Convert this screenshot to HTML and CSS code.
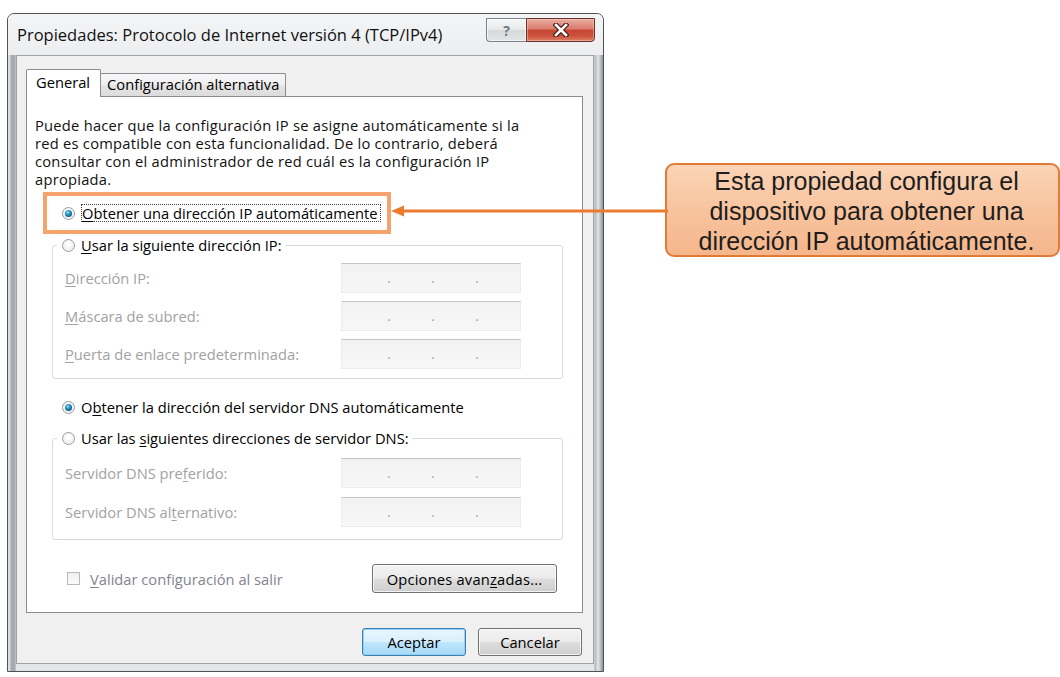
FILE: index.html
```html
<!DOCTYPE html>
<html lang="es">
<head>
<meta charset="utf-8">
<title>Propiedades: Protocolo de Internet versión 4 (TCP/IPv4)</title>
<link rel="stylesheet" href="styles.css">
</head>
<body>
<div class="stage">
  <div class="window">
    <div class="titlebar">
      <span class="title">Propiedades: Protocolo de Internet versión 4 (TCP/IPv4)</span>
      <div class="caption-buttons">
        <span class="cap-btn cap-help">?</span>
        <span class="cap-btn cap-close">
          <svg width="16" height="14" viewBox="0 0 16 14" aria-hidden="true">
            <path d="M3 2 L13 12 M13 2 L3 12" stroke="#4a1e18" stroke-width="5" stroke-linecap="square"/>
            <path d="M3 2 L13 12 M13 2 L3 12" stroke="#ffffff" stroke-width="2.6" stroke-linecap="square"/>
          </svg>
        </span>
      </div>
    </div>

    <div class="client">
      <div class="tabs">
        <span class="tab tab-active">General</span>
        <span class="tab">Configuración alternativa</span>
      </div>

      <div class="panel">
        <p class="intro">Puede hacer que la configuración IP se asigne automáticamente si la<br>red es compatible con esta funcionalidad. De lo contrario, deberá<br>consultar con el administrador de red cuál es la configuración IP<br>apropiada.</p>

        <div class="highlight">
          <div class="radio checked">
            <span class="radio-mark"></span>
            <span class="focus"><u>O</u>btener una dirección IP automáticamente</span>
          </div>
        </div>

        <fieldset class="group group-ip">
          <legend>
            <span class="radio"><span class="radio-mark"></span><span><u>U</u>sar la siguiente dirección IP:</span></span>
          </legend>
          <div class="field-row">
            <span class="field-label"><u>D</u>irección IP:</span>
            <span class="ipbox"><i>.</i><i>.</i><i>.</i></span>
          </div>
          <div class="field-row">
            <span class="field-label"><u>M</u>áscara de subred:</span>
            <span class="ipbox"><i>.</i><i>.</i><i>.</i></span>
          </div>
          <div class="field-row">
            <span class="field-label"><u>P</u>uerta de enlace predeterminada:</span>
            <span class="ipbox"><i>.</i><i>.</i><i>.</i></span>
          </div>
        </fieldset>

        <div class="radio checked radio-dns">
          <span class="radio-mark"></span>
          <span>O<u>b</u>tener la dirección del servidor DNS automáticamente</span>
        </div>

        <fieldset class="group group-dns">
          <legend>
            <span class="radio"><span class="radio-mark"></span><span>Usar las <u>s</u>iguientes direcciones de servidor DNS:</span></span>
          </legend>
          <div class="field-row">
            <span class="field-label">Servidor DNS pre<u>f</u>erido:</span>
            <span class="ipbox"><i>.</i><i>.</i><i>.</i></span>
          </div>
          <div class="field-row">
            <span class="field-label">Servidor DNS al<u>t</u>ernativo:</span>
            <span class="ipbox"><i>.</i><i>.</i><i>.</i></span>
          </div>
        </fieldset>

        <div class="panel-foot">
          <span class="check"><span class="check-mark"></span><span><u>V</u>alidar configuración al salir</span></span>
          <span class="btn btn-wide">Opciones avan<u>z</u>adas...</span>
        </div>
      </div>

      <div class="dialog-buttons">
        <span class="btn btn-default">Aceptar</span>
        <span class="btn">Cancelar</span>
      </div>
    </div>
  </div>

  <div class="callout">Esta propiedad configura el<br>dispositivo para obtener una<br>dirección IP automáticamente.</div>

  <svg class="pointer" width="278" height="16" viewBox="0 0 278 16" aria-hidden="true">
    <line x1="10" y1="8" x2="278" y2="8" stroke="#ec7b2e" stroke-width="3"/>
    <polygon points="1,8 14,2.5 14,13.5" fill="#ec7b2e"/>
  </svg>
</div>
</body>
</html>
```

FILE: styles.css
```css
* { box-sizing: border-box; }

html, body { margin: 0; padding: 0; }

body {
  width: 1060px;
  height: 677px;
  overflow: hidden;
  background: #ffffff;
  font-family: "Open Sans", "Noto Sans", sans-serif;
  color: #000;
}

.stage {
  position: relative;
  display: flex;
  align-items: flex-start;
  height: 677px;
}

/* ---------- window frame ---------- */
.window {
  margin: 13px 0 0 7px;
  width: 597px;
  padding: 0 9px 7px 8px;
  border: 1px solid #4f5358;
  border-radius: 7px 7px 0 0;
  background:
    linear-gradient(90deg, #d9dbdd 0, #d9dbdd 2px, #a6aaae 3px, #a6aaae 7px, #cfd2d5 8px, transparent 8px),
    linear-gradient(270deg, #8d9195 0, #c4c7ca 3px, #e4e6e8 5px, #b0b4b8 8px, transparent 9px),
    linear-gradient(#f1f2f3, #e7e9eb 60px, #e3e5e7);
  box-shadow: inset 0 1px 0 #fafbfb;
}

.titlebar {
  display: flex;
  justify-content: space-between;
  align-items: flex-start;
  height: 41px;
  background: linear-gradient(#f3f4f5, #eceef0);
  margin: 0 -9px 0 -8px;
  padding: 0 9px 0 8px;
  border-radius: 6px 6px 0 0;
}

.title {
  font-size: 16.5px;
  line-height: 41px;
  padding-left: 1px;
  white-space: nowrap;
  color: #111;
}

.caption-buttons {
  display: flex;
  margin-top: 4px;
  margin-right: -1px;
}

.cap-btn {
  display: flex;
  align-items: center;
  justify-content: center;
  height: 24px;
}

.cap-help {
  width: 40px;
  border: 1px solid #7d8288;
  border-right: none;
  border-radius: 0 0 0 4px;
  background: linear-gradient(#f6f7f8, #e6e8ea 48%, #d6d9dc 52%, #e2e4e7);
  box-shadow: inset 0 0 0 1px rgba(255,255,255,0.6);
  font-size: 14px;
  font-weight: 700;
  color: #6d7a86;
}

.cap-close {
  width: 69px;
  border: 1px solid #6a3128;
  border-radius: 0 0 4px 0;
  background: linear-gradient(#e9aea3, #da7b6c 45%, #c74532 52%, #cc523e 78%, #dc8068);
  box-shadow: inset 0 0 0 1px rgba(255,210,200,0.45);
}

/* ---------- client area ---------- */
.client {
  border: 1px solid #9da2a7;
  background: #f0f0f0;
  padding: 13px 10px 7px 9px;
}

.tabs {
  display: flex;
  align-items: flex-end;
  height: 27px;
}

.tab {
  height: 23px;
  padding: 0 6px;
  margin-left: -1px;
  border: 1px solid #898c95;
  border-bottom: none;
  border-radius: 2px 2px 0 0;
  background: linear-gradient(#f7f7f7, #efefef 50%, #e5e5e5 51%, #dcdcdc);
  font-size: 14.7px;
  line-height: 21px;
  white-space: nowrap;
}

.tab-active {
  position: relative;
  z-index: 1;
  height: 28px;
  margin: 0 0 -1px 0;
  padding: 0 10px 0 9px;
  background: #ffffff;
  line-height: 24px;
}

.panel {
  border: 1px solid #898c95;
  background: #ffffff;
  padding: 19px 0 19px 8px;
  font-size: 14.7px;
}

.intro {
  margin: 0;
  line-height: 18px;
  letter-spacing: 0.25px;
  white-space: nowrap;
  color: #111;
}

u {
  text-decoration-thickness: 1px;
  text-underline-offset: 2px;
}

/* ---------- radio buttons ---------- */
.radio {
  display: flex;
  align-items: center;
  gap: 6px;
  height: 18px;
  line-height: 18px;
  white-space: nowrap;
}

.radio-mark {
  position: relative;
  flex: none;
  width: 13px;
  height: 13px;
  border-radius: 50%;
  border: 1px solid #9a9da0;
  background: radial-gradient(circle at 50% 40%, #ffffff 20%, #dfe1e3 90%);
  box-shadow: inset 0 0 0 1px #f5f5f5;
}

.radio.checked .radio-mark::after {
  content: "";
  position: absolute;
  inset: 2px;
  border-radius: 50%;
  background: radial-gradient(circle at 40% 35%, #9fe0f5 0, #2a95c4 35%, #12577f 75%, #0d3e5b 100%);
}

.focus {
  border: 1px dotted #444;
  line-height: 16px;
  padding: 0 2px 0 0;
}

.highlight {
  width: 348px;
  margin: 4px 0 0 8px;
  border: 4px solid #f3a36b;
  padding: 8px 0 8px 15px;
}

.radio-dns {
  margin: 19px 0 0 27px;
}

/* ---------- group boxes ---------- */
.group {
  margin: 0 19px 0 17px;
  border: 1px solid #d5dbe0;
  border-radius: 3px;
  min-width: 0;
}

.group-ip {
  margin-top: 2px;
  padding: 9px 42px 9px 12px;
}

.group-dns {
  margin-top: 13px;
  padding: 11px 44px 12px 12px;
}

.group legend {
  margin-left: -8px;
  padding: 0 3px 0 5px;
}

.field-row {
  display: grid;
  grid-template-columns: 276px 180px;
  align-items: center;
  height: 30px;
}

.group-ip .field-row + .field-row { margin-top: 8px; }
.group-dns .field-row + .field-row { margin-top: 9px; }

.field-label {
  color: #a2a2a2;
  white-space: nowrap;
}

.ipbox {
  display: flex;
  height: 30px;
  padding-left: 45px;
  border: 1px solid #ececee;
  border-top-color: #c4c4c6;
  background: linear-gradient(#f2f2f2, #f7f7f7);
  color: #a8a8a8;
  line-height: 26px;
}

.ipbox i {
  font-style: normal;
  width: 44px;
}

/* ---------- bottom rows ---------- */
.panel-foot {
  display: flex;
  justify-content: space-between;
  align-items: center;
  margin-top: 24px;
  padding: 0 25px 0 32px;
  height: 29px;
}

.check {
  display: flex;
  align-items: center;
  gap: 10px;
  color: #84848f;
  white-space: nowrap;
}

.check-mark {
  width: 13px;
  height: 13px;
  border: 1px solid #b9b9b9;
  background: linear-gradient(#efefef, #fbfbfb);
}

.btn {
  display: flex;
  align-items: center;
  justify-content: center;
  width: 104px;
  height: 28px;
  border: 1px solid #707070;
  border-radius: 3px;
  background: linear-gradient(#f3f3f3, #ebebeb 48%, #dddddd 52%, #cfcfcf);
  box-shadow: inset 0 0 0 1px rgba(255,255,255,0.75);
  font-size: 14.7px;
  white-space: nowrap;
}

.btn-wide {
  width: 185px;
  height: 29px;
  letter-spacing: 0.2px;
}

.btn-default {
  border-color: #3c7fb1;
  background: linear-gradient(#eaf6fd, #d9f0fc 48%, #bee6fd 52%, #a7d9f5);
  box-shadow: inset 0 0 0 1px #8fd0f3;
}

.dialog-buttons {
  display: flex;
  justify-content: flex-end;
  gap: 12px;
  margin-top: 15px;
  padding-right: 1px;
}

/* ---------- annotation ---------- */
.callout {
  flex: none;
  width: 395px;
  height: 94px;
  margin: 163px 0 0 61px;
  padding: 1px 0 0 8px;
  border: 2px solid #e07b39;
  border-radius: 9px;
  background: linear-gradient(#fbd4b6, #f7c19a 60%, #f5b68b);
  font-family: "Liberation Sans", Arial, sans-serif;
  font-size: 25px;
  line-height: 30px;
  text-align: center;
  color: #1e1e1e;
}

.pointer {
  position: absolute;
  left: 390px;
  top: 203px;
  z-index: 2;
}
```
